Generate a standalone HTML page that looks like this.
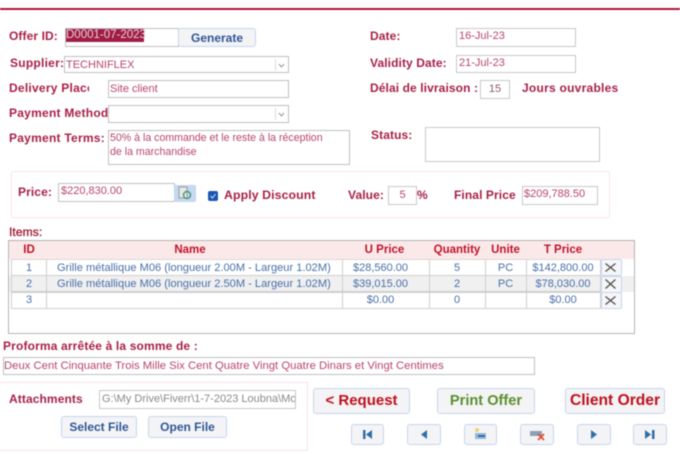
<!DOCTYPE html>
<html><head><meta charset="utf-8">
<style>
html,body{margin:0;padding:0;background:#fff;}
#p{position:relative;width:680px;height:454px;overflow:hidden;font-family:"Liberation Sans",sans-serif;filter:blur(0.45px);}
#p div,#p svg{position:absolute;box-sizing:border-box;}
.l{font-size:12px;font-weight:bold;color:#a82148;white-space:nowrap;line-height:14px;letter-spacing:.1px;}
.w{letter-spacing:.25px;}
.i{border:1px solid #c8c8c8;font-size:11px;color:#b8456c;line-height:13px;padding:1px 0 0 2px;background:#fff;white-space:nowrap;overflow:hidden;}
.s{border:1px solid #c0c0c0;}
.b{border:1px solid #c6d6ee;border-radius:3px;background:#f4f4f6;font-size:12px;font-weight:bold;color:#2f5597;text-align:center;white-space:nowrap;}
.h{font-size:11.5px;font-weight:bold;color:#c0142c;text-align:center;top:243px;line-height:14px;height:14px;white-space:nowrap;}
.c{font-size:11px;color:#4a6fa8;text-align:center;line-height:15px;height:15px;white-space:nowrap;}
.v{background:#cfcfcf;width:1px;top:259px;height:50px;}
.x{border:1px solid #c6d6ee;border-radius:2px;background:#f6f6f8;left:601px;width:21px;height:17px;}
</style></head><body><div id="p">
<div style="left:0;top:8px;width:680px;height:2px;background:#b0143c"></div>

<div class="l" style="left:9px;top:29px">Offer ID:</div>
<div class="i s" style="left:65px;top:28px;width:114px;height:19px"></div>
<div style="left:66px;top:29px;width:78px;height:13px;background:#a01c44;color:#e8d0d8;font-size:11.5px;line-height:13px;white-space:nowrap">D0001-07-2023</div>
<div class="b" style="left:178px;top:28px;width:78px;height:19px;line-height:18px">Generate</div>

<div class="l w" style="left:10px;top:56px">Supplier:</div>
<div class="i s" style="left:64px;top:56px;width:225px;height:17px;padding:2px 0 0 1px">TECHNIFLEX</div>
<svg style="left:275px;top:59px" width="13" height="12"><path d="M4 5l2.500 3 2.500-3" fill="none" stroke="#999" stroke-width="1"/><path d="M.5 0v12" stroke="#ddd"/></svg>

<div class="l w" style="left:9px;top:81px;width:80px;overflow:hidden">Delivery Place</div>
<div class="i s" style="left:108px;top:80px;width:181px;height:18px;padding:2px 0 0 1px">Site client</div>

<div class="l w" style="left:9px;top:106px">Payment Method</div>
<div class="i s" style="left:108px;top:105px;width:181px;height:18px"></div>
<svg style="left:275px;top:108px" width="13" height="12"><path d="M4 5l2.500 3 2.500-3" fill="none" stroke="#999" stroke-width="1"/><path d="M.5 0v12" stroke="#ddd"/></svg>

<div class="l w" style="left:9px;top:131px">Payment Terms:</div>
<div class="i s" style="left:108px;top:130px;width:242px;height:35px;white-space:normal;font-size:10.6px;line-height:14px;padding:0 0 0 1px">50% à la commande et le reste à la réception<br>de la marchandise</div>

<div class="l" style="left:370px;top:29px">Date:</div>
<div class="i" style="left:456px;top:28px;width:120px;height:19px">16-Jul-23</div>
<div class="l" style="left:370px;top:56px">Validity Date:</div>
<div class="i" style="left:456px;top:55px;width:120px;height:18px">21-Jul-23</div>
<div class="l" style="left:370px;top:81px">Délai de livraison :</div>
<div class="i" style="left:480px;top:80px;width:30px;height:19px;text-align:center;padding:2px 0 0;color:#8a5a70">15</div>
<div class="l w" style="left:522px;top:81px">Jours ouvrables</div>
<div class="l" style="left:371px;top:128px">Status:</div>
<div class="i" style="left:425px;top:127px;width:175px;height:35px"></div>

<div style="left:11px;top:171px;width:599px;height:47px;border:1px solid #f8e8ea;border-radius:2px"></div>
<div class="l" style="left:18px;top:185px">Price:</div>
<div class="i s" style="left:58px;top:183px;width:117px;height:19px">$220,830.00</div>
<div style="left:174px;top:185px;width:22px;height:17px;background:#c4d9f2;border:1px solid #c6d6ee;border-radius:2px"></div>
<svg style="left:177px;top:186px" width="16" height="15"><rect x="2" y="1" width="8" height="11" fill="#e8e8e8" stroke="#9a9a9a"/><circle cx="10" cy="9" r="3.500" fill="none" stroke="#4a9a78" stroke-width="1.500"/></svg>
<div style="left:208px;top:191px;width:10px;height:10px;background:#1a56b0;border-radius:2px"></div>
<svg style="left:208px;top:191px" width="10" height="10"><path d="M2.500 5l2 2 3-4" fill="none" stroke="#cfe0f8" stroke-width="1"/></svg>
<div class="l" style="left:224px;top:188px;font-size:12.3px">Apply Discount</div>
<div class="l" style="left:348px;top:188px">Value:</div>
<div class="i" style="left:388px;top:186px;width:29px;height:19px;text-align:center;padding:2px 0 0">5</div>
<div class="l" style="left:417px;top:188px">%</div>
<div class="l" style="left:454px;top:188px">Final Price</div>
<div class="i" style="left:522px;top:186px;width:76px;height:19px;padding-left:1px">$209,788.50</div>

<div class="l" style="left:9px;top:225px;font-weight:normal;color:#a01c34;-webkit-text-stroke:.35px #a01c34">Items:</div>
<div style="left:8px;top:240px;width:627px;height:94px;border:1px solid #b4b4b4"></div>
<div style="left:9px;top:241px;width:625px;height:18px;background:#fbe9e9"></div>
<div style="left:9px;top:276px;width:625px;height:16px;background:#f0f0f0"></div>
<div style="left:11px;top:259px;width:590px;height:50px;border:1px solid #cfcfcf;border-top:1px solid #d8d8d8"></div>
<div style="left:11px;top:275px;width:590px;height:1px;background:#cfcfcf"></div>
<div style="left:11px;top:291px;width:590px;height:2px;background:#cfcfcf"></div>
<div class="v" style="left:46px"></div><div class="v" style="left:342px"></div><div class="v" style="left:429px"></div><div class="v" style="left:485px"></div><div class="v" style="left:526px"></div>

<div class="h" style="left:12px;width:34px">ID</div>
<div class="h" style="left:46px;width:288px">Name</div>
<div class="h" style="left:342px;width:85px">U Price</div>
<div class="h" style="left:429px;width:56px">Quantity</div>
<div class="h" style="left:485px;width:41px">Unite</div>
<div class="h" style="left:526px;width:74px">T Price</div>

<div class="c" style="left:12px;top:261px;width:34px">1</div>
<div class="c" style="left:57px;top:261px;width:285px;text-align:left;font-size:11.1px">Grille métallique M06 (longueur 2.00M - Largeur 1.02M)</div>
<div class="c" style="left:342px;top:261px;width:77px">$28,560.00</div>
<div class="c" style="left:429px;top:261px;width:56px">5</div>
<div class="c" style="left:485px;top:261px;width:41px">PC</div>
<div class="c" style="left:526px;top:261px;width:74px">$142,800.00</div>

<div class="c" style="left:12px;top:277px;width:34px">2</div>
<div class="c" style="left:57px;top:277px;width:285px;text-align:left;font-size:11.1px">Grille métallique M06 (longueur 2.50M - Largeur 1.02M)</div>
<div class="c" style="left:342px;top:277px;width:77px">$39,015.00</div>
<div class="c" style="left:429px;top:277px;width:56px">2</div>
<div class="c" style="left:485px;top:277px;width:41px">PC</div>
<div class="c" style="left:526px;top:277px;width:74px">$78,030.00</div>

<div class="c" style="left:12px;top:293px;width:34px">3</div>
<div class="c" style="left:342px;top:293px;width:77px">$0.00</div>
<div class="c" style="left:429px;top:293px;width:56px">0</div>
<div class="c" style="left:526px;top:293px;width:74px">$0.00</div>

<div class="x" style="top:259px"></div><div class="x" style="top:276px"></div><div class="x" style="top:292px"></div>
<svg style="left:600px;top:259px" width="21" height="50"><path d="M5.500 4.500l10 8m0-8l-10 8M5.500 20.500l10 9m0-9l-10 9M5.500 37.500l10 8m0-8l-10 8" fill="none" stroke="#555" stroke-width="1.400"/></svg>

<div class="l" style="left:3px;top:339px;letter-spacing:.15px">Proforma arrêtée à la somme de :</div>
<div class="i s" style="left:3px;top:357px;width:532px;height:18px;padding:2px 0 0 0;font-size:11.3px">Deux Cent Cinquante Trois Mille Six Cent Quatre Vingt Quatre Dinars et Vingt Centimes</div>

<div style="left:-2px;top:382px;width:310px;height:69px;border:1px solid #f8e4e8"></div>
<div class="l" style="left:9px;top:392px">Attachments</div>
<div class="i" style="left:99px;top:390px;width:197px;height:19px;color:#8a8a8a;padding-top:2px">G:\My Drive\Fiverr\1-7-2023 Loubna\Mo</div>
<div class="b" style="left:61px;top:416px;width:76px;height:22px;line-height:20px">Select File</div>
<div class="b" style="left:148px;top:416px;width:79px;height:22px;line-height:20px">Open File</div>

<div class="b" style="left:313px;top:388px;width:97px;height:26px;line-height:24px;font-size:15px;color:#c0101c">&lt; Request</div>
<div class="b" style="left:437px;top:388px;width:98px;height:26px;line-height:24px;font-size:14.6px;color:#5a8f2c">Print Offer</div>
<div class="b" style="left:565px;top:388px;width:100px;height:26px;line-height:24px;font-size:15.6px;color:#c0101c">Client Order</div>

<div class="b" style="left:351px;top:424px;width:33px;height:21px"></div>
<svg style="left:351px;top:424px" width="33" height="21"><path d="M12 6h2.500v9H12zM21 6v9l-6-4.500z" fill="#2f6fa8"/></svg>
<div class="b" style="left:407px;top:424px;width:34px;height:21px"></div>
<svg style="left:407px;top:424px" width="34" height="21"><path d="M20 6v9l-6-4.500z" fill="#2f6fa8"/></svg>
<div class="b" style="left:464px;top:424px;width:33px;height:21px"></div>
<svg style="left:464px;top:424px" width="33" height="21"><circle cx="13" cy="6" r="2" fill="#f0d070"/><rect x="11" y="9" width="11" height="6" fill="#9ab8d8"/><rect x="14" y="11" width="7" height="2" fill="#2f6fa8"/></svg>
<div class="b" style="left:520px;top:424px;width:34px;height:21px"></div>
<svg style="left:520px;top:424px" width="34" height="21"><rect x="10" y="7" width="12" height="5" fill="#8aa0b8"/><path d="M18 10l6 6m0-6l-6 6" stroke="#e84a30" stroke-width="1.600"/></svg>
<div class="b" style="left:577px;top:424px;width:34px;height:21px"></div>
<svg style="left:577px;top:424px" width="34" height="21"><path d="M14 6v9l6-4.500z" fill="#2f6fa8"/></svg>
<div class="b" style="left:633px;top:424px;width:34px;height:21px"></div>
<svg style="left:633px;top:424px" width="34" height="21"><path d="M12 6v9l6-4.500zM19 6h2.500v9H19z" fill="#2f6fa8"/></svg>
</div></body></html>
